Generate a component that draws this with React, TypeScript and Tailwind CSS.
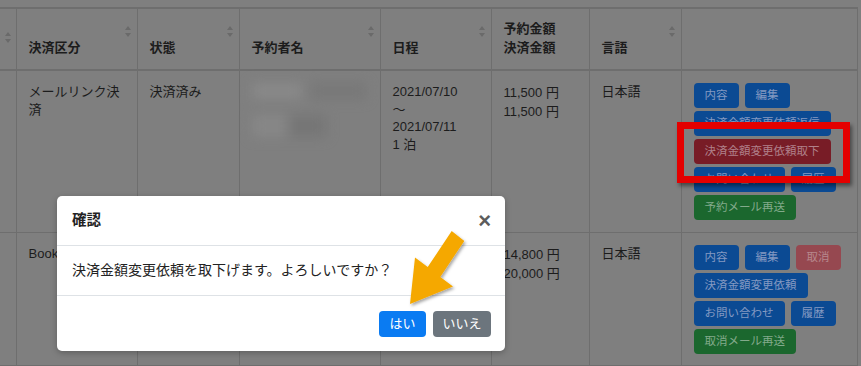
import React from 'react';

const font = "font-['Liberation_Sans','Noto_Sans_CJK_JP',sans-serif]";

function SortIcon() {
  return (
    <svg width="6" height="11" viewBox="0 0 6 11" className="shrink-0 self-center mt-[-3px]">
      <path d="M3 0 L6 4 L0 4 Z" fill="#6a6a6a" />
      <path d="M3 11 L6 7 L0 7 Z" fill="#6a6a6a" />
    </svg>
  );
}

type Tone = 'blue' | 'red' | 'green' | 'faded';

const toneClass: Record<Tone, string> = {
  blue: 'bg-[#0b4a93] text-[#8399c2]',
  red: 'bg-[#781c26] text-[#b0808a]',
  green: 'bg-[#1b672e] text-[#82aa8b]',
  faded: 'bg-[#964850] text-[#b7878d]',
};

function Btn({ label, tone = 'blue' }: { label: string; tone?: Tone }) {
  return (
    <span
      className={`flex h-[25px] items-center rounded-[4px] px-[11px] text-[11.5px] leading-none whitespace-nowrap ${toneClass[tone]}`}
    >
      {label}
    </span>
  );
}

function HeadCell({ children, sort = true }: { children?: React.ReactNode; sort?: boolean }) {
  return (
    <th className="border-x border-[#6e6e6e] p-0 text-left align-bottom font-bold">
      <div className="flex h-[60px] items-end justify-between pb-3 pl-3 pr-[6px]">
        <span className="leading-[19px]">{children}</span>
        {sort && <SortIcon />}
      </div>
    </th>
  );
}

const td = 'border-x border-[#6e6e6e] px-3 pt-3 pb-3 align-top';

export default function App() {
  return (
    <div className={`relative h-[366px] w-[861px] overflow-hidden bg-[#7f7f7f] text-[13px] text-[#1c1c1c] ${font}`}>
      <table className="mt-[7px] table-fixed border-collapse">
        <colgroup>
          <col className="w-[16px]" />
          <col className="w-[121px]" />
          <col className="w-[102px]" />
          <col className="w-[141px]" />
          <col className="w-[111px]" />
          <col className="w-[98px]" />
          <col className="w-[92px]" />
          <col className="w-[176px]" />
        </colgroup>
        <thead>
          <tr className="border-y-2 border-[#6e6e6e]">
            <th className="border-r border-[#6e6e6e] p-0 align-middle">
              <div className="flex h-[60px] justify-end pr-[5px]">
                <SortIcon />
              </div>
            </th>
            <HeadCell>決済区分</HeadCell>
            <HeadCell>状態</HeadCell>
            <HeadCell>予約者名</HeadCell>
            <HeadCell>日程</HeadCell>
            <HeadCell sort={false}>
              予約金額
              <br />
              決済金額
            </HeadCell>
            <HeadCell>言語</HeadCell>
            <HeadCell sort={false} />
          </tr>
        </thead>
        <tbody className="leading-[18px]">
          <tr className="border-b border-[#6e6e6e]">
            <td className="border-r border-[#6e6e6e]" />
            <td className={td}>メールリンク決済</td>
            <td className={td}>決済済み</td>
            <td className={td}>
              <div className="flex flex-col gap-[16px] blur-[6px]">
                <div className="flex gap-[8px]">
                  <span className="h-[16px] w-[50px] bg-[#898989]" />
                  <span className="h-[16px] w-[56px] bg-[#787878]" />
                </div>
                <div className="flex">
                  <span className="h-[22px] w-[36px] bg-[#878787]" />
                  <span className="h-[22px] w-[38px] bg-[#767676]" />
                </div>
              </div>
            </td>
            <td className={`${td} leading-[17.5px]`}>
              2021/07/10
              <br />～<br />
              2021/07/11
              <br />1 泊
            </td>
            <td className={`${td} leading-[19px]`}>
              11,500 円
              <br />
              11,500 円
            </td>
            <td className={td}>日本語</td>
            <td className={td}>
              <div className="flex flex-col gap-[3px]">
                <div className="flex gap-[6px]">
                  <Btn label="内容" />
                  <Btn label="編集" />
                </div>
                <div className="flex">
                  <Btn label="決済金額変更依頼返信" />
                </div>
                <div className="flex">
                  <Btn label="決済金額変更依頼取下" tone="red" />
                </div>
                <div className="flex gap-[6px]">
                  <Btn label="お問い合わせ" />
                  <Btn label="履歴" />
                </div>
                <div className="flex">
                  <Btn label="予約メール再送" tone="green" />
                </div>
              </div>
            </td>
          </tr>
          <tr className="border-b border-[#6e6e6e]">
            <td className="border-r border-[#6e6e6e]" />
            <td className={td}>Booking.com</td>
            <td className={td}>決済済み</td>
            <td className={td} />
            <td className={`${td} leading-[17.5px]`}>
              2021/07/17
              <br />～<br />
              2021/07/18
              <br />1 泊
            </td>
            <td className={`${td} leading-[19px]`}>
              14,800 円
              <br />
              20,000 円
            </td>
            <td className={td}>日本語</td>
            <td className={`${td} pb-[11px]`}>
              <div className="flex flex-col gap-[3px]">
                <div className="flex gap-[6px]">
                  <Btn label="内容" />
                  <Btn label="編集" />
                  <Btn label="取消" tone="faded" />
                </div>
                <div className="flex">
                  <Btn label="決済金額変更依頼" />
                </div>
                <div className="flex gap-[6px]">
                  <Btn label="お問い合わせ" />
                  <Btn label="履歴" />
                </div>
                <div className="flex">
                  <Btn label="取消メール再送" tone="green" />
                </div>
              </div>
            </td>
          </tr>
        </tbody>
      </table>

      {/* confirm dialog */}
      <div className="absolute left-[57px] top-[196px] flex h-[155px] w-[448px] flex-col rounded-[5px] bg-white text-[#222] shadow-[0_2px_6px_rgba(0,0,0,0.25)]">
        <div className="flex h-[50px] items-center justify-between border-b border-[#dee2e6] pl-[15px] pr-[14px]">
          <span className="text-[14.5px] font-semibold">確認</span>
          <span className="text-[22px] leading-none font-bold text-[#5c5c5c]">×</span>
        </div>
        <div className="flex h-[50px] items-center border-b border-[#dee2e6] px-[15px] text-[14px]">
          決済金額変更依頼を取下げます。よろしいですか？
        </div>
        <div className="flex flex-1 items-center justify-end gap-[7px] pr-[14px]">
          <button className="h-[26px] w-[47px] rounded-[4px] bg-[#0a7bf2] text-[13px] text-white">はい</button>
          <button className="h-[26px] w-[58px] rounded-[4px] bg-[#6c757d] text-[13px] text-white">いいえ</button>
        </div>
      </div>

      {/* annotations */}
      <div className="absolute left-[677px] top-[122px] h-[61px] w-[173px] border-[7px] border-[#e40000] shadow-[2px_3px_4px_rgba(0,0,0,0.45)]" />
      <svg className="pointer-events-none absolute left-0 top-0" width="861" height="366">
        <defs>
          <filter id="sh" x="-20%" y="-20%" width="140%" height="140%">
            <feDropShadow dx="1.5" dy="2" stdDeviation="1.5" floodColor="#000" floodOpacity="0.35" />
          </filter>
        </defs>
        <polygon
          points="451.7,231.1 427.7,267.1 415,257.4 410,304 453,286.6 440.3,276.9 464.3,240.9"
          fill="#f5a800"
          filter="url(#sh)"
        />
      </svg>
    </div>
  );
}
